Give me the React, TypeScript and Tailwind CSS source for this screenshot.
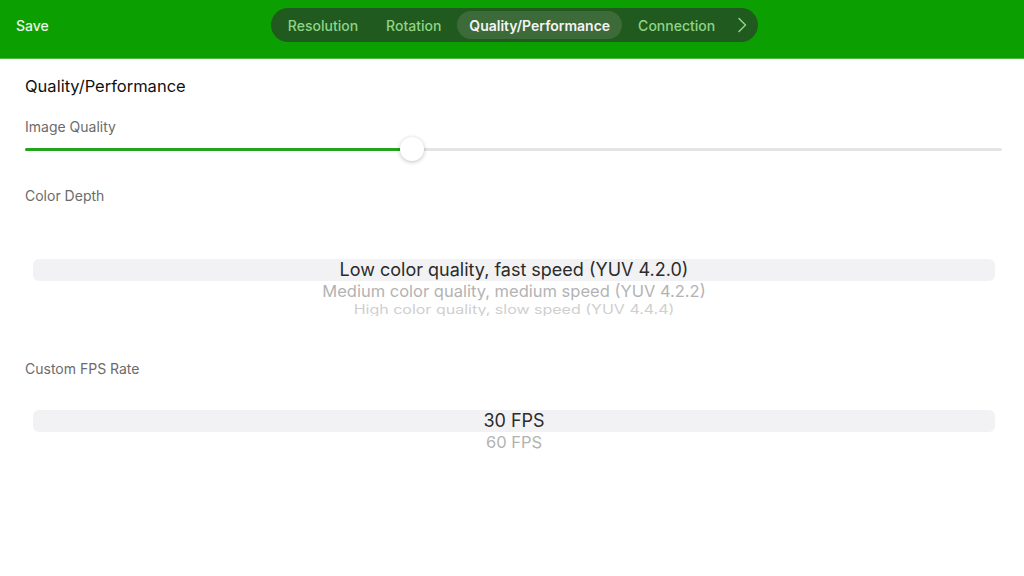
import { useState } from 'react';

const tabs = ['Resolution', 'Rotation', 'Quality/Performance', 'Connection'];

interface PickerProps {
    items: string[];
    height: string;
}

function Picker({ items, height }: PickerProps) {
    const rowStyles = [
        'h-[22px] text-[18px] text-[#2b2b2b] bg-[#f2f2f4] rounded-md',
        'h-[20px] text-[16.5px] text-[#b3b3b3]',
        'h-[16px] text-[16px] text-[#cfcfcf] scale-y-[0.8]',
    ];
    return (
        <div className={`${height} overflow-hidden`}>
            {items.map((item, i) => (
                <div
                    key={item}
                    className={`flex items-center justify-center leading-none ${rowStyles[i]}`}
                >
                    {item}
                </div>
            ))}
        </div>
    );
}

export default function App() {
    const [tab, setTab] = useState('Quality/Performance');
    const [quality] = useState(0.396);

    return (
        <div className="w-[1024px] h-[576px] bg-white overflow-hidden" style={{ fontFamily: 'Inter, "Noto Sans", sans-serif' }}>
            {/* Header */}
            <header className="h-[59px] bg-[#0b9f02] border-b border-[#4fb845] pt-2 grid grid-cols-[1fr_auto_1fr] items-start">
                <button className="justify-self-start h-[34px] pl-4 text-[14px] font-medium text-[#e8f6e3]">Save</button>
                <nav className="ml-[5px] h-[34px] rounded-full bg-[#215a1e] p-[3px] pl-[5px] pr-[11px] flex items-center gap-1">
                    {tabs.map((t) => (
                        <button
                            key={t}
                            onClick={() => setTab(t)}
                            className={
                                t === tab
                                    ? 'h-full px-3 rounded-full bg-[#3d6a39] text-[14px] font-semibold text-[#f4f4f4]'
                                    : 'h-full px-3 rounded-full text-[14px] font-medium text-[#8fd487]'
                            }
                        >
                            {t}
                        </button>
                    ))}
                    <svg className="w-[10px] h-[16px] ml-[6px] text-[#8fd487]" viewBox="0 0 10 16" fill="none" stroke="currentColor" strokeWidth="1.5" strokeLinecap="round" strokeLinejoin="round">
                        <path d="M2 1.5l6.5 6.5-6.5 6.5" />
                    </svg>
                </nav>
                <div />
            </header>

            {/* Content */}
            <main className="px-[25px] pt-4">
                <h1 className="text-[16.5px] leading-[22px] text-[#111]">Quality/Performance</h1>

                <p className="mt-5 text-[14px] leading-5 text-[#6b6b6b]">Image Quality</p>
                <div className="relative h-6 w-[977px] flex items-center">
                    <div className="h-[3px] w-full rounded-full bg-[#e4e4e6]" />
                    <div className="absolute left-0 h-[3px] rounded-full bg-[#24a31c]" style={{ width: `${quality * 100}%` }} />
                    <div
                        className="absolute w-6 h-6 -ml-3 rounded-full bg-white shadow-[0_1px_4px_rgba(0,0,0,0.25)]"
                        style={{ left: `${quality * 100}%` }}
                    />
                </div>

                <p className="mt-[25px] text-[14px] leading-5 text-[#6b6b6b]">Color Depth</p>
                <div className="mt-[53px] pl-2 pr-1">
                    <Picker
                        height="h-[57px]"
                        items={[
                            'Low color quality, fast speed (YUV 4.2.0)',
                            'Medium color quality, medium speed (YUV 4.2.2)',
                            'High color quality, slow speed (YUV 4.4.4)',
                        ]}
                    />
                </div>

                <p className="mt-[43px] text-[14px] leading-5 text-[#6b6b6b]">Custom FPS Rate</p>
                <div className="mt-[31px] pl-2 pr-1">
                    <Picker height="h-[45px]" items={['30 FPS', '60 FPS', '90 FPS']} />
                </div>
            </main>
        </div>
    );
}
